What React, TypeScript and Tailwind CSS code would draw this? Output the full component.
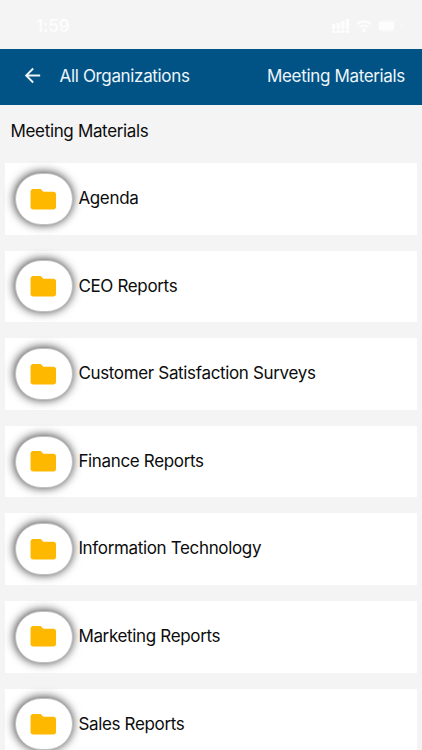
import React from 'react';
import { MdArrowBack, MdFolder } from 'react-icons/md';

interface FolderRowProps {
  name: string;
}

const folders: string[] = [
  'Agenda',
  'CEO Reports',
  'Customer Satisfaction Surveys',
  'Finance Reports',
  'Information Technology',
  'Marketing Reports',
  'Sales Reports',
];

const StatusBar: React.FC = () => {
  return (
    <div className="flex h-[49px] shrink-0 items-center justify-between pt-[4px] pr-[18px] pl-[36px] text-[#fdfdfd]">
      <span className="text-[17px] font-semibold tracking-[-0.2px]">1:59</span>
      <div className="flex items-center gap-[6px] pb-[1.5px]">
        <svg width="18" height="14" viewBox="0 0 18 14" fill="currentColor">
          <rect x="0" y="5" width="3.4" height="5" rx="0.6" />
          <rect x="4.6" y="3.7" width="3.4" height="6.3" rx="0.6" />
          <rect x="9.2" y="2" width="3.4" height="8" rx="0.6" />
          <rect x="13.8" y="0" width="3.4" height="10" rx="0.6" />
          <rect x="0" y="11" width="3.4" height="3" rx="0.6" />
          <rect x="4.6" y="11" width="3.4" height="3" rx="0.6" />
          <rect x="9.2" y="11" width="3.4" height="3" rx="0.6" />
          <rect x="13.8" y="11" width="3.4" height="3" rx="0.6" />
        </svg>
        <svg width="16" height="12" viewBox="0 0 16 12" fill="none" stroke="currentColor" strokeWidth="2.2">
          <path d="M1 4.2a10 10 0 0 1 14 0" />
          <path d="M3.9 7.2a6 6 0 0 1 8.2 0" />
          <circle cx="8" cy="10" r="0.9" fill="currentColor" />
        </svg>
        <svg width="26" height="12" viewBox="0 0 26 12">
          <rect x="0.5" y="0.5" width="22" height="11" rx="3" fill="none" stroke="#f7f7f7" />
          <rect x="1" y="1.5" width="15" height="9" rx="1.8" fill="currentColor" />
          <path d="M24 4v4a2.2 2.2 0 0 0 0-4" fill="#f7f7f7" />
        </svg>
      </div>
    </div>
  );
};

const FolderRow: React.FC<FolderRowProps> = ({ name }) => {
  return (
    <li className="flex h-[71.6px] shrink-0 items-center bg-white pl-[9.5px]">
      <div className="flex h-[52px] w-[58px] shrink-0 items-center justify-center rounded-full border border-[#c0c0c0] bg-white shadow-[-0.5px_-0.5px_10px_0.5px_rgba(0,0,0,0.72)]">
        <MdFolder className="mr-[1.6px] text-[30.6px] text-[#ffb800]" />
      </div>
      <span className="mb-[1.5px] ml-[5.5px] text-[17px] leading-6">{name}</span>
    </li>
  );
};

const App: React.FC = () => {
  return (
    <div className="flex h-[750px] w-full flex-col overflow-hidden bg-[#f4f4f4] font-['Inter',sans-serif] tracking-[-0.34px] text-[#0c0c0c]">
      <StatusBar />
      <header className="flex h-[55.5px] shrink-0 items-center bg-[#015386] pr-[17px] pb-[1px] pl-[20.5px] text-[17px] text-[#eef5fa]">
        <MdArrowBack className="mb-[1px] text-[23px]" />
        <span className="ml-[16px]">All Organizations</span>
        <span className="ml-auto">Meeting Materials</span>
      </header>
      <h1 className="mt-[14.5px] shrink-0 pl-[10.5px] text-[17px] leading-6">Meeting Materials</h1>
      <ul className="mt-[20px] flex flex-col gap-[16px] pr-[5.5px] pl-[5.4px]">
        {folders.map((name) => (
          <FolderRow key={name} name={name} />
        ))}
      </ul>
    </div>
  );
};

export default App;
